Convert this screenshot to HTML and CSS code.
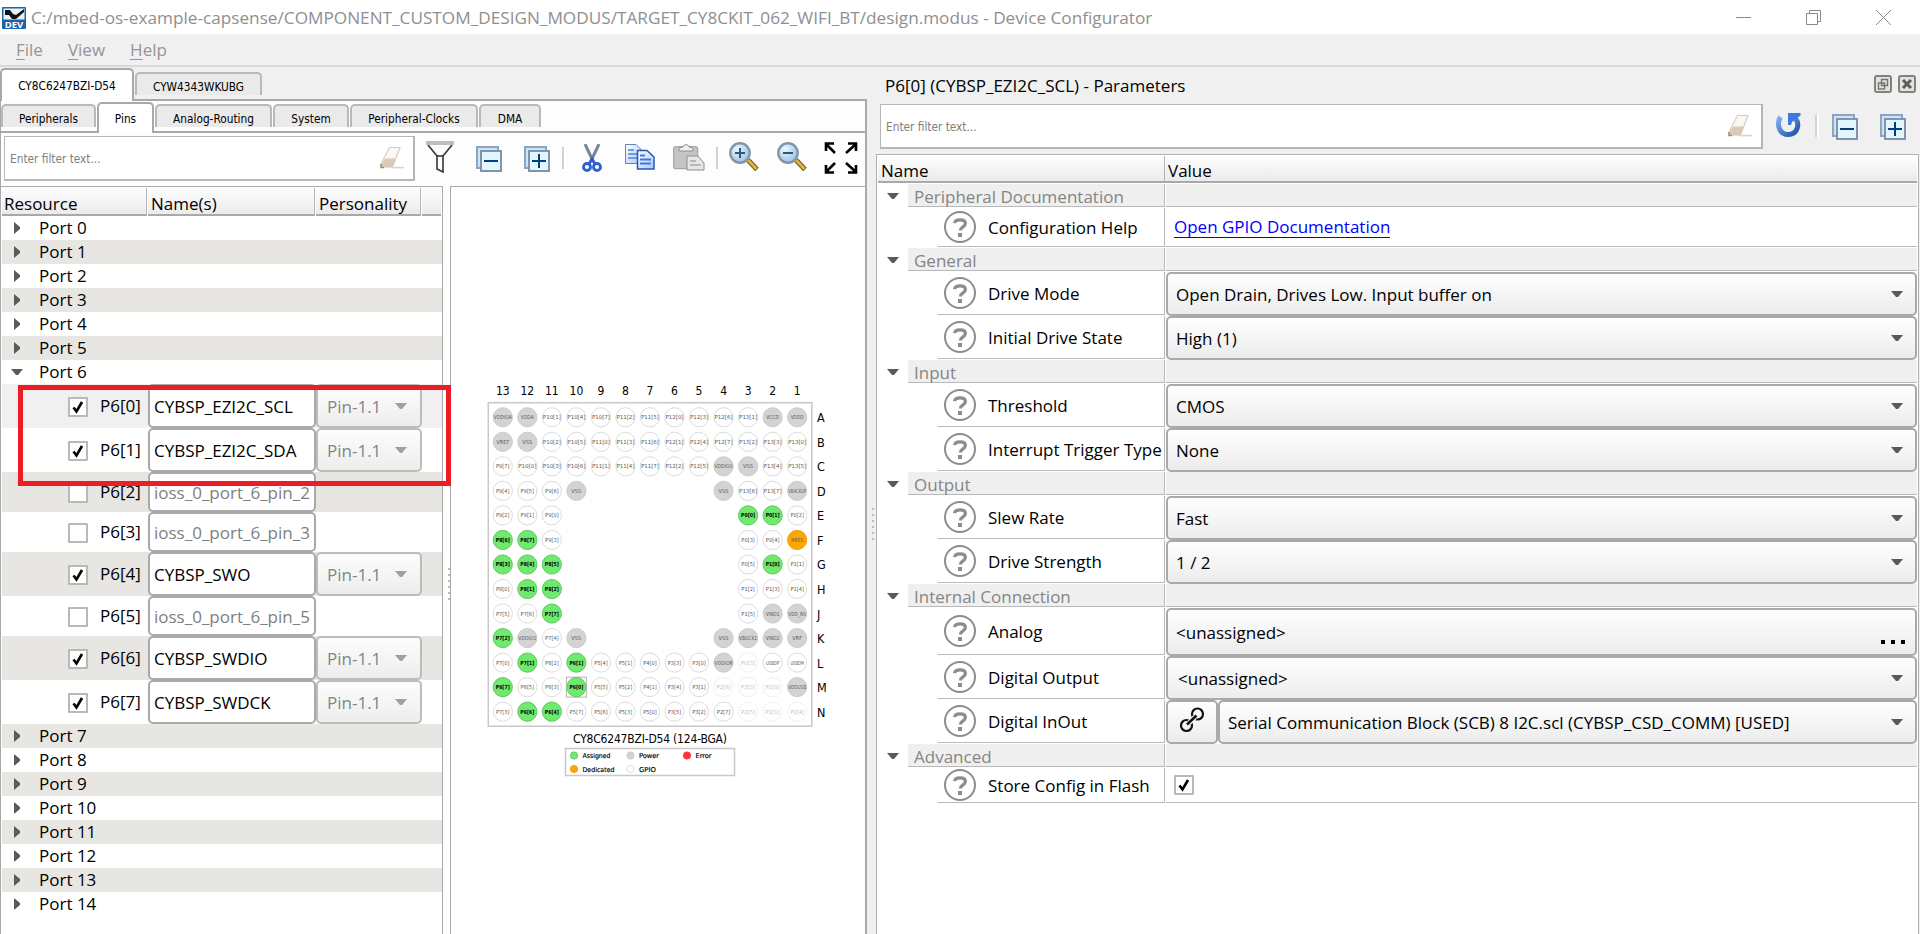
FILE: index.html
```
<!DOCTYPE html>
<html lang="en">
<head>
<meta charset="utf-8">
<title>Device Configurator</title>
<link rel="stylesheet" href="styles.css">
</head>
<body>
<svg class="defs" width="0" height="0">
  <defs>
    <linearGradient id="g-blue" x1="0" y1="0" x2="1" y2="1"><stop offset="0" stop-color="#7fb0f5"/><stop offset="1" stop-color="#1d4fa8"/></linearGradient>
    <linearGradient id="g-page" x1="0" y1="0" x2="1" y2="1"><stop offset="0" stop-color="#ffffff"/><stop offset="1" stop-color="#a9c8f7"/></linearGradient>
    <radialGradient id="g-lens" cx=".35" cy=".3" r=".8"><stop offset="0" stop-color="#eaf6ff"/><stop offset="1" stop-color="#8fc0e6"/></radialGradient>
  </defs>
  <symbol id="help" viewBox="0 0 32 32"><circle cx="16" cy="16" r="15" fill="#fff" stroke="#8c8c8c" stroke-width="2"/><path d="M10.6 12.2C10.8 9.8 13 8.8 16 8.8c3.400 0 5.400 1.300 5.400 3.800 0 3.400-5 3.200-5 7" fill="none" stroke="#8c8c8c" stroke-width="3.200"/><rect x="14" y="22" width="4" height="4" fill="#8c8c8c"/></symbol>
  <symbol id="down" viewBox="0 0 12 6"><path d="M0 0h12L7 6H5z" fill="currentColor"/></symbol>
  <symbol id="right" viewBox="0 0 6 12"><path d="M0 0L6 5v2L0 12z" fill="#5a5a5a"/></symbol>
  <symbol id="check" viewBox="0 0 16 16"><path d="M3.500 8.500L6.500 12.500L12 3" fill="none" stroke="#000" stroke-width="2.600"/></symbol>
  <symbol id="eraser" viewBox="0 0 24 24"><path d="M9.500 1.500L20 1.500L12.500 21L1.500 21L1 18z" fill="#fbf8f3" stroke="#d8cdbd" stroke-width="1.200"/><path d="M5 12.500L15.500 12.500L12.500 21.300L1 21.300L1 19z" fill="#d9cbb8"/><path d="M1 18v3.500h3" fill="none" stroke="#a08f78" stroke-width="1.500"/><path d="M11 21.600H24" stroke="#ddd3c5" stroke-width="1.600"/></symbol>
  <symbol id="collapse" viewBox="0 0 26 26"><rect x="1" y="1" width="21" height="21" fill="#c5e8ff" stroke="#93a3bd" stroke-width="2"/><rect x="5" y="5" width="20" height="20" fill="#e2f6ff" stroke="#8392ad" stroke-width="2"/><path d="M8 15H22" stroke="#003f79" stroke-width="2"/></symbol>
  <symbol id="expand" viewBox="0 0 26 26"><rect x="1" y="1" width="21" height="21" fill="#c5e8ff" stroke="#93a3bd" stroke-width="2"/><rect x="5" y="5" width="20" height="20" fill="#e2f6ff" stroke="#8392ad" stroke-width="2"/><path d="M8 15H22M15 8V22" stroke="#003f79" stroke-width="2"/></symbol>
  <symbol id="funnel" viewBox="0 0 28 32"><path d="M2 4L11 15V28L17 31V15L26 4" fill="#fdfdfd" stroke="#333" stroke-width="1.600"/><path d="M11 15H17" stroke="#333" stroke-width="1.600"/><path d="M0 2H28" stroke="#bdbdbd" stroke-width="4"/></symbol>
  <symbol id="lens" viewBox="0 0 30 30"><path d="M19 18L28 27.500" stroke="#6f5a28" stroke-width="5"/><path d="M19 18L27.500 27" stroke="#e9b23a" stroke-width="2.800"/><circle cx="11" cy="11" r="9.700" fill="url(#g-lens)" stroke="#8395a8" stroke-width="2.400"/></symbol>
</svg>

<header class="titlebar">
  <svg class="app-icon" viewBox="0 0 24 22"><rect width="24" height="22" rx="1" fill="#1b64a6"/><rect x="1.500" y="1.500" width="21" height="11" fill="#e9f1f7"/><path d="M3 3h5l3 4 3 1 8-6v3l-8 7h-4L7 8 3 8z" fill="#111"/><text x="12" y="20.500" text-anchor="middle" class="app-icon-text">DEV</text></svg>
  <span class="title">C:/mbed-os-example-capsense/COMPONENT_CUSTOM_DESIGN_MODUS/TARGET_CY8CKIT_062_WIFI_BT/design.modus - Device Configurator</span>
  <div class="window-buttons">
    <svg width="15" height="15"><path d="M0 7.500H15" stroke="#888"/></svg>
    <svg width="15" height="15"><path d="M.5 3.500H11.500V14.500H.5zM3.500 3.500V.5H14.500V11.500H11.500" fill="none" stroke="#888"/></svg>
    <svg width="15" height="15"><path d="M0 0L15 15M15 0L0 15" stroke="#888"/></svg>
  </div>
</header>
<nav class="menubar"><span><u>F</u>ile</span><span><u>V</u>iew</span><span><u>H</u>elp</span></nav>

<main class="workspace">
  <section class="left">
    <div class="tabs device-tabs"><span class="tab on">CY8C6247BZI-D54</span><span class="tab">CYW4343WKUBG</span></div>
    <div class="pane">
      <div class="tabs view-tabs"><span class="tab w95">Peripherals</span><span class="tab on w57">Pins</span><span class="tab w117">Analog-Routing</span><span class="tab w76">System</span><span class="tab w128">Peripheral-Clocks</span><span class="tab w62">DMA</span></div>
      <div class="toolbar">
        <div class="filter"><span>Enter filter text...</span><svg width="24" height="24"><use href="#eraser"/></svg></div>
        <svg class="t-funnel" width="28" height="32"><use href="#funnel"/></svg>
        <svg class="t-collapse" width="26" height="26"><use href="#collapse"/></svg>
        <svg class="t-expand" width="26" height="26"><use href="#expand"/></svg>
        <i class="sep"></i>
        <svg class="t-cut" width="20" height="28" viewBox="0 0 20 28"><path d="M3 0L11 17M17 0L9 17" stroke="#76879a" stroke-width="3"/><circle cx="5" cy="23" r="3.500" fill="none" stroke="#2f5fd0" stroke-width="2.800"/><circle cx="15" cy="23" r="3.500" fill="none" stroke="#2f5fd0" stroke-width="2.800"/><path d="M7 20L10 15L13 20" fill="none" stroke="#2f5fd0" stroke-width="3"/></svg>
        <svg class="t-copy" width="30" height="26" viewBox="0 0 30 26"><path d="M.5 .5H11L17 6.500V19.500H.5z" fill="url(#g-page)" stroke="#5d84c4"/><path d="M3 6H9M3 10H12M3 14H12" stroke="#6d9be8" stroke-width="1.800"/><path d="M12.500 6.500H22L29 13V25H12.500z" fill="url(#g-page)" stroke="#2b57b5" stroke-width="1.500"/><path d="M15 11.500H20M15 15.500H26M15 19.500H26" stroke="#3f78e0" stroke-width="2"/></svg>
        <svg class="t-paste" width="32" height="27" viewBox="0 0 32 27"><rect x=".7" y="2.700" width="24" height="22" rx="1.500" fill="#c4c4c4" stroke="#9a9a9a"/><path d="M6 7V4L10 3C10 0 16 0 16 3L20 4V7z" fill="#eee" stroke="#909090"/><path d="M14 12H25L31 19V26H14z" fill="#e6e6e6" stroke="#8e8e8e"/><path d="M17 17H23M17 21H28" stroke="#a8a8a8" stroke-width="1.600"/></svg>
        <i class="sep"></i>
        <svg class="t-in" width="30" height="30" viewBox="0 0 30 30"><use href="#lens"/><path d="M6 11H16M11 6V16" stroke="#2f5878" stroke-width="2"/></svg>
        <svg class="t-out" width="30" height="30" viewBox="0 0 30 30"><use href="#lens"/><path d="M6 11H16" stroke="#2f5878" stroke-width="2"/></svg>
        <svg class="t-fit" width="34" height="32" viewBox="0 0 34 32"><path d="M2 9V1.500H10M2 2L11 11M24 1.500H32V9M32 2L22 11M2 23V30.500H10M2 30L11 21M24 30.500H32V23M32 30L22 21" fill="none" stroke="#000" stroke-width="2.600"/></svg>
      </div>
      <div class="split">
        <div class="tree">
          <div class="tree-head"><span>Resource</span><span>Name(s)</span><span>Personality</span><span></span></div>
          <div class="port"><svg width="6" height="12"><use href="#right"/></svg>Port 0</div>
          <div class="port alt"><svg width="6" height="12"><use href="#right"/></svg>Port 1</div>
          <div class="port"><svg width="6" height="12"><use href="#right"/></svg>Port 2</div>
          <div class="port alt"><svg width="6" height="12"><use href="#right"/></svg>Port 3</div>
          <div class="port"><svg width="6" height="12"><use href="#right"/></svg>Port 4</div>
          <div class="port alt"><svg width="6" height="12"><use href="#right"/></svg>Port 5</div>
          <div class="port open"><svg width="12" height="6"><use href="#down"/></svg>Port 6</div>
          <div class="marked">
            <div class="pin current"><i class="box"><svg><use href="#check"/></svg></i><b>P6[0]</b><span class="name">CYBSP_EZI2C_SCL</span><span class="pers">Pin-1.1<svg><use href="#down"/></svg></span></div>
            <div class="pin"><i class="box"><svg><use href="#check"/></svg></i><b>P6[1]</b><span class="name">CYBSP_EZI2C_SDA</span><span class="pers">Pin-1.1<svg><use href="#down"/></svg></span></div>
          </div>
          <div class="pin small alt"><i class="box"></i><b>P6[2]</b><span class="name">ioss_0_port_6_pin_2</span></div>
          <div class="pin small"><i class="box"></i><b>P6[3]</b><span class="name">ioss_0_port_6_pin_3</span></div>
          <div class="pin alt"><i class="box"><svg><use href="#check"/></svg></i><b>P6[4]</b><span class="name">CYBSP_SWO</span><span class="pers">Pin-1.1<svg><use href="#down"/></svg></span></div>
          <div class="pin small"><i class="box"></i><b>P6[5]</b><span class="name">ioss_0_port_6_pin_5</span></div>
          <div class="pin alt"><i class="box"><svg><use href="#check"/></svg></i><b>P6[6]</b><span class="name">CYBSP_SWDIO</span><span class="pers">Pin-1.1<svg><use href="#down"/></svg></span></div>
          <div class="pin"><i class="box"><svg><use href="#check"/></svg></i><b>P6[7]</b><span class="name">CYBSP_SWDCK</span><span class="pers">Pin-1.1<svg><use href="#down"/></svg></span></div>
          <div class="port alt"><svg width="6" height="12"><use href="#right"/></svg>Port 7</div>
          <div class="port"><svg width="6" height="12"><use href="#right"/></svg>Port 8</div>
          <div class="port alt"><svg width="6" height="12"><use href="#right"/></svg>Port 9</div>
          <div class="port"><svg width="6" height="12"><use href="#right"/></svg>Port 10</div>
          <div class="port alt"><svg width="6" height="12"><use href="#right"/></svg>Port 11</div>
          <div class="port"><svg width="6" height="12"><use href="#right"/></svg>Port 12</div>
          <div class="port alt"><svg width="6" height="12"><use href="#right"/></svg>Port 13</div>
          <div class="port"><svg width="6" height="12"><use href="#right"/></svg>Port 14</div>
        </div>
        <div class="grip"></div>
        <div class="package"><svg id="package" width="415" height="747" viewBox="451 187 415 747"></svg></div>
      </div>
    </div>
  </section>
  <div class="grip wide"></div>
  <section class="right">
    <div class="dock-title"><span>P6[0] (CYBSP_EZI2C_SCL) - Parameters</span>
      <svg width="18" height="20" viewBox="0 0 18 20"><rect x="1" y="2" width="16" height="16" rx="2" fill="#e3e2df" stroke="#83817c" stroke-width="2"/><path d="M7.500 5.500H13.500V11.500H7.500zM4.500 9H10.500V15H4.500z" fill="#e3e2df" stroke="#77756f" stroke-width="1.400"/></svg>
      <svg width="18" height="20" viewBox="0 0 18 20"><rect x="1" y="2" width="16" height="16" rx="2" fill="#e3e2df" stroke="#83817c" stroke-width="2"/><path d="M5 6L13 14M13 6L5 14" stroke="#5f5d59" stroke-width="3"/></svg>
    </div>
    <div class="param-bar">
      <div class="filter"><span>Enter filter text...</span><svg width="24" height="24"><use href="#eraser"/></svg></div>
      <svg class="p-reset" width="25" height="25" viewBox="0 0 25 25"><path d="M4.500 4C.5 10 2.500 21.500 12 21.500S24 11 19.500 5.500" fill="none" stroke="url(#g-blue)" stroke-width="5"/><path d="M12 0H24.500V2.500L16 9L15 12H12z" fill="#3f78e0"/></svg>
      <i class="sep"></i>
      <svg class="p-collapse" width="26" height="26"><use href="#collapse"/></svg>
      <svg class="p-expand" width="26" height="26"><use href="#expand"/></svg>
    </div>
    <div class="params">
      <div class="param-head"><span>Name</span><span>Value</span></div>
      <div class="group"><svg><use href="#down"/></svg><span>Peripheral Documentation</span><i></i></div>
      <div class="row h40"><span class="label"><svg><use href="#help"/></svg>Configuration Help</span><span class="value"><a class="link">Open GPIO Documentation</a></span></div>
      <div class="group"><svg><use href="#down"/></svg><span>General</span><i></i></div>
      <div class="row"><span class="label"><svg><use href="#help"/></svg>Drive Mode</span><span class="value"><span class="combo">Open Drain, Drives Low. Input buffer on<svg><use href="#down"/></svg></span></span></div>
      <div class="row"><span class="label"><svg><use href="#help"/></svg>Initial Drive State</span><span class="value"><span class="combo">High (1)<svg><use href="#down"/></svg></span></span></div>
      <div class="group"><svg><use href="#down"/></svg><span>Input</span><i></i></div>
      <div class="row"><span class="label"><svg><use href="#help"/></svg>Threshold</span><span class="value"><span class="combo">CMOS<svg><use href="#down"/></svg></span></span></div>
      <div class="row"><span class="label"><svg><use href="#help"/></svg>Interrupt Trigger Type</span><span class="value"><span class="combo">None<svg><use href="#down"/></svg></span></span></div>
      <div class="group"><svg><use href="#down"/></svg><span>Output</span><i></i></div>
      <div class="row"><span class="label"><svg><use href="#help"/></svg>Slew Rate</span><span class="value"><span class="combo">Fast<svg><use href="#down"/></svg></span></span></div>
      <div class="row"><span class="label"><svg><use href="#help"/></svg>Drive Strength</span><span class="value"><span class="combo">1 / 2<svg><use href="#down"/></svg></span></span></div>
      <div class="group"><svg><use href="#down"/></svg><span>Internal Connection</span><i></i></div>
      <div class="row h48"><span class="label"><svg><use href="#help"/></svg>Analog</span><span class="value"><span class="combo">&lt;unassigned&gt;<em class="dots"><i></i><i></i><i></i></em></span></span></div>
      <div class="row"><span class="label"><svg><use href="#help"/></svg>Digital Output</span><span class="value"><span class="combo inset">&lt;unassigned&gt;<svg><use href="#down"/></svg></span></span></div>
      <div class="row"><span class="label"><svg><use href="#help"/></svg>Digital InOut</span><span class="value"><span class="link-btn"><svg width="26" height="26" viewBox="0 0 26 26"><g fill="none" stroke="#111" stroke-width="2.200"><circle cx="18.500" cy="7" r="5.500"/><circle cx="7.500" cy="18.500" r="5.500"/></g><path d="M10 16L16 10" stroke="#fff" stroke-width="5"/><path d="M8 17.500L17.500 8.500" stroke="#111" stroke-width="2.600"/></svg></span><span class="combo scb">Serial Communication Block (SCB) 8 I2C.scl (CYBSP_CSD_COMM) [USED]<svg><use href="#down"/></svg></span></span></div>
      <div class="group"><svg><use href="#down"/></svg><span>Advanced</span><i></i></div>
      <div class="row h36"><span class="label"><svg><use href="#help"/></svg>Store Config in Flash</span><span class="value"><i class="box"><svg><use href="#check"/></svg></i></span></div>
    </div>
  </section>
</main>
<script src="package.js"></script>
</body>
</html>
```
FILE: styles.css
```
* { box-sizing: border-box; }
body { margin: 0; width: 1920px; height: 934px; overflow: hidden; background: #f0f0f0; color: #000; font: 17px "Open Sans", "Noto Sans", sans-serif; display: flex; flex-direction: column; white-space: nowrap; }
svg { display: block; flex: none; }
i, em, b { font-style: normal; font-weight: 400; }
.defs { position: absolute; }

.titlebar { height: 34px; flex: none; background: #fff; display: flex; align-items: center; padding: 1px 29px 0 2px; color: #8f8f8f; }
.app-icon { width: 24px; height: 22px; margin-top: 1px; }
.app-icon-text { font: 700 9.500px "Open Sans", sans-serif; fill: #fff; }
.title { margin-left: 5px; font-size: 17.200px; }
.window-buttons { margin-left: auto; display: flex; gap: 55px; }
.menubar { height: 33px; flex: none; display: flex; gap: 25px; padding: 3px 0 0 16px; color: #959595; border-bottom: 2px solid #d9d9d9; font-size: 17px; line-height: 26px; }
.menubar u { text-underline-offset: 3px; text-decoration-thickness: 1px; }

.workspace { flex: 1; display: flex; min-height: 0; }
.left { width: 867px; display: flex; flex-direction: column; }
.tabs { display: flex; align-items: flex-end; font: 11.750px "DejaVu Sans Condensed", "DejaVu Sans", sans-serif; }
.tab { display: flex; align-items: center; justify-content: center; background: #eaeaea; border: 2px solid #b9b9b9; border-bottom: 0; border-radius: 5px 5px 0 0; height: 23px; margin-bottom: 4px; padding-top: 5px; flex: none; }
.tab.on { background: #fff; border-color: #a9a9a9; position: relative; margin-bottom: -2px; padding: 0; }
.device-tabs { height: 32px; }
.device-tabs .tab { width: 127px; margin-left: 1px; }
.device-tabs .tab.on { width: 134px; height: 33px; margin-left: 0; z-index: 1; }
.pane { flex: 1; display: flex; flex-direction: column; background: #fdfdfd; border: solid #a9a9a9; border-width: 2px 2px 0 1px; min-height: 0; }
.view-tabs { height: 32px; border-bottom: 2px solid #a9a9a9; gap: 1px; flex: none; }
.view-tabs .tab.on { height: 31px; }
.w95 { width: 95px; } .w57 { width: 57px; } .w117 { width: 117px; } .w76 { width: 76px; } .w128 { width: 128px; } .w62 { width: 62px; }

.toolbar { height: 53px; flex: none; display: flex; padding-left: 3px; align-items: flex-start; }
.filter { display: flex; align-items: center; justify-content: space-between; background: #fff; border: solid #b6b6b6; border-width: 1px 2px 2px 1px; height: 45px; padding: 2px 9px 0 5px; color: #808080; font: 11.750px "DejaVu Sans Condensed", "DejaVu Sans", sans-serif; }
.toolbar .filter { width: 411px; margin-top: 3px; }
.filter svg { margin-bottom: 3px; }
.sep { width: 4px; height: 22px; border-left: 2px solid #d2d2d2; border-right: 2px solid #fff; margin-top: 14px; }
.t-funnel { margin: 8px 0 0 11px; }
.t-collapse { margin: 13px 0 0 22px; }
.t-expand { margin: 13px 12px 0 22px; }
.t-cut { margin: 11px 0 0 16px; }
.t-copy { margin: 11px 0 0 23px; }
.t-paste { margin: 11px 11px 0 18px; }
.t-in { margin: 9px 0 0 9px; }
.t-out { margin: 9px 0 0 18px; }
.t-fit { margin: 9px 0 0 17px; }

.split { flex: 1; display: flex; min-height: 0; }
.tree { width: 442px; background: #fff; border: solid #a9a9a9; border-width: 1px 1px 0 0; padding: 1px 0 0 1px; }
.tree-head { display: flex; height: 28px; margin-right: 1px; }
.tree-head span, .param-head span { background: linear-gradient(#fdfdfd, #ebebeb); border-bottom: 2px solid #a9a9a9; border-right: 1px solid #b5b5b5; padding: 2px 0 0 3px; line-height: 27px; margin-right: 1px; }
.tree-head span:nth-child(1) { width: 145px; padding-left: 2px; }
.tree-head span:nth-child(2) { width: 167px; }
.tree-head span:nth-child(3) { width: 105px; }
.tree-head span:nth-child(4) { flex: 1; border-right: 0; margin: 0; }
.port { height: 24px; padding-left: 12px; display: flex; align-items: center; line-height: 24px; }
.port svg { margin-right: 19px; }
.port.open svg { margin: 0 16px 0 -3px; }
.port svg, .group svg { color: #5a5a5a; }
.alt { background: #e7e6e2; }
.pin { height: 44px; display: flex; align-items: center; padding-left: 66px; }
.pin.small { height: 40px; }
.pin b { width: 48px; padding-left: 12px; font-size: 17px; line-height: 24px; }
.box { display: block; width: 20px; height: 20px; border: 2px solid #b9b9b9; border-radius: 1px; background: #fff; flex: none; }
.pin .box { margin-top: 1px; }
.box svg { width: 16px; height: 16px; }
.name { align-self: stretch; width: 168px; margin-left: 12px; background: #fff; border: 2px solid #a9a9a9; border-radius: 5px; display: flex; align-items: center; padding-left: 4px; }
.small .name { color: #808080; }
.pers { align-self: stretch; width: 106px; background: linear-gradient(#fdfdfd, #ededed); border: 2px solid #bcbcbc; border-radius: 5px; color: #858585; display: flex; align-items: center; padding: 0 13px 0 9px; justify-content: space-between; }
.pers svg, .combo svg { width: 12px; height: 6px; }
.pers svg { color: #a0a0a0; }
.current { background: #f0f0f0; }
.marked { position: relative; }
.marked::after { content: ""; position: absolute; left: 16px; top: 1px; width: 423px; height: 91px; border: 5px solid #ee1c25; }

.grip { width: 7px; display: flex; align-items: center; position: relative; }
.grip::after { content: ""; position: absolute; left: 5px; top: 382px; width: 2px; height: 34px; background: repeating-linear-gradient(#bdbdbd 0 2px, transparent 2px 6px); }
.grip.wide { width: 9px; }
.grip.wide::after { left: 5px; top: 441px; }
.package { flex: 1; background: #fff; border: solid #a9a9a9; border-width: 1px 0 0 1px; overflow: hidden; }
.package text { font-family: "DejaVu Sans Condensed", "DejaVu Sans", sans-serif; }
.ball { stroke: #dcdcdc; stroke-width: 1; fill: #fff; }
.ball-power { fill: #d3d3d3; stroke: #cccccc; }
.ball-on { fill: #6fea6f; stroke: #62c862; }
.ball-ded { fill: #ffa500; stroke: #f0a020; }
.ball-err { fill: #ff3333; stroke: #ff3333; }
.pad { font-size: 5.500px; fill: #5c5c5c; text-anchor: middle; }
.pad-on { fill: #000; font-weight: 700; }
.faint { opacity: .4; }
.axis { font-size: 12px; text-anchor: middle; }
.axis-row { font-size: 12.500px; }
.caption { font-size: 12px; text-anchor: middle; }
.key { font-size: 6.600px; stroke: #000; stroke-width: .15; }
.frame { fill: none; stroke: #c8c8c8; stroke-width: 1.500; }

.right { width: 1044px; display: flex; flex-direction: column; padding: 0 1px 0 0; }
.dock-title { display: flex; align-items: center; height: 37px; padding: 0 3px 0 9px; margin-right: 0; }
.dock-title span { flex: 1; }
.dock-title svg { margin: -3px 0 0 6px; }
.param-bar { height: 50px; display: flex; align-items: flex-start; }
.param-bar .filter { width: 883px; margin-left: 4px; }
.p-reset { margin: 9px 0 0 13px; }
.param-bar .sep { margin: 11px 0 0 14px; }
.p-collapse { margin: 10px 0 0 13px; }
.p-expand { margin: 10px 0 0 22px; }
.params { flex: 1; background: #fff; border: solid #b0b0b0; border-width: 1px 1px 0 1px; padding: 1px 1px 0; }
.param-head { display: flex; height: 28px; padding-bottom: 1px; }
.param-head span { line-height: 25px; margin: 0; }
.param-head span:nth-child(1) { width: 287px; }
.param-head span:nth-child(2) { flex: 1; border-right: 0; }
.group { height: 24px; display: grid; grid-template-columns: 30px 257px 1fr; align-items: center; color: #858585; }
.group svg { width: 12px; height: 6px; margin-left: 9px; }
.group span, .group i { height: 23px; background: #efefef; border-bottom: 1px solid #b9b9b9; align-self: start; line-height: 25px; padding-left: 6px; }
.group span { border-right: 1px solid #b9b9b9; }
.group i { margin-left: 1px; }
.row { height: 44px; display: flex; padding-left: 60px; }
.row.h40 { height: 40px; } .row.h48 { height: 48px; } .row.h36 { height: 36px; }
.label { width: 227px; display: flex; align-items: center; height: calc(100% - 1px); border: solid #b9b9b9; border-width: 0 1px 1px 0; padding-left: 6px; }
.label svg { width: 32px; height: 32px; margin-right: 12px; }
.value { flex: 1; display: flex; align-items: center; margin-left: 1px; height: 100%; }
.h40 .value, .h36 .value { height: calc(100% - 1px); border-bottom: 1px solid #b9b9b9; padding-left: 8px; }
.link { color: #00f; line-height: 21px; border-bottom: 1px solid #00f; }
.combo, .link-btn { height: 100%; border: 2px solid #a9a9a9; border-radius: 5px; background: linear-gradient(#fefefe, #ececec); display: flex; align-items: center; }
.combo { flex: 1; justify-content: space-between; padding: 0 12px 0 8px; }
.combo svg { color: #5a5a5a; }
.combo.inset { padding-left: 10px; }
.link-btn { width: 52px; justify-content: center; padding-bottom: 5px; }
.dots { display: flex; gap: 6px; align-self: flex-end; margin: 0 -2px 10px 0; }
.dots i { width: 4px; height: 4px; background: #000; }
```
FILE: package.js
```
// Ball map of the 124-BGA package: "*" assigned, "#" power, "!" dedicated, "~" disabled, "-" no ball.
const rows = {
  A: '#VDDIOA #VDDA P10[1] P10[4] P10[7] P11[2] P11[5] P12[0] P12[3] P12[6] P13[1] #VCCD #VDDD',
  B: '#VREF #VSS P10[2] P10[5] P11[0] P11[3] P11[6] P12[1] P12[4] P12[7] P13[2] P13[3] P13[0]',
  C: 'P9[7] P10[0] P10[3] P10[6] P11[1] P11[4] P11[7] P12[2] P12[5] #VDDIO0 #VSS P13[4] P13[5]',
  D: 'P9[4] P9[5] P9[6] #VSS - - - - - #VSS P13[6] P13[7] #VBACKUP',
  E: 'P9[2] P9[1] P9[0] - - - - - - - *P0[0] *P0[1] P0[2]',
  F: '*P8[6] *P8[7] P9[3] - - - - - - - P0[3] P0[4] !XRES',
  G: '*P8[3] *P8[4] *P8[5] - - - - - - - P0[5] *P1[0] P1[1]',
  H: 'P8[0] *P8[1] *P8[2] - - - - - - - P1[2] P1[3] P1[4]',
  J: 'P7[5] P7[6] *P7[7] - - - - - - - P1[5] #VIND1 #VDD_NS',
  K: '*P7[2] #VDDIO1 P7[4] #VSS - - - - - #VSS #VBUCK1 #VIND2 #VRF',
  L: 'P7[0] *P7[1] P6[2] *P6[1] P5[4] P5[1] P4[0] P3[3] P3[0] #VDDIOR ~P0[3] USBDP USBDM',
  M: '*P6[7] P6[5] P6[3] *P6[0] P5[5] P5[2] P4[1] P3[4] P3[1] ~P2[6] ~P2[3] ~P2[0] #VDDUSB',
  N: 'P7[3] *P6[6] *P6[4] P5[7] P5[6] P5[3] P5[0] P3[5] P3[2] P2[7] ~P2[5] ~P2[1] ~P2[4]'
};
const x0 = 502.8, y0 = 417.3, pitch = 24.53;
const kinds = { '*': 'on', '#': 'power', '!': 'ded', '~': 'off' };
let out = '<rect class="frame" x="488.3" y="402.7" width="323.5" height="323.500"/>';

for (let c = 0; c < 13; c++) {
  out += `<text class="axis" x="${x0 + c * pitch}" y="395">${13 - c}</text>`;
}
Object.entries(rows).forEach(([letter, line], r) => {
  const y = y0 + r * pitch;
  out += `<text class="axis-row" x="817" y="${y + 5}">${letter}</text>`;
  line.split(' ').forEach((cell, c) => {
    if (cell === '-') return;
    const kind = kinds[cell[0]] || '';
    const label = kind ? cell.slice(1) : cell;
    const x = x0 + c * pitch;
    if (label === 'P6[0]') out += `<rect x="${x - 10}" y="${y - 10}" width="20" height="20" fill="#fff" stroke="#b4b4b4"/>`;
    out += `<g class="${kind === 'off' ? 'faint' : ''}"><circle class="ball ball-${kind}" cx="${x}" cy="${y}" r="9.6"/>`;
    const len = label.length > 5 ? 18 : label.length > 4 ? (kind ? 14 : 13.5) : label.length > 3 ? 13 : 10;
    out += `<text class="pad pad-${kind}" x="${x}" y="${y + 2}" textLength="${len}" lengthAdjust="spacingAndGlyphs">${label}</text></g>`;
  });
});

out += '<text class="caption" x="650" y="742.500" textLength="154">CY8C6247BZI-D54 (124-BGA)</text>';
out += '<rect class="frame" x="565.5" y="748.5" width="169" height="27"/>';
[['on', 'Assigned', 574, 755.5, 28], ['power', 'Power', 630.5, 755.5, 20], ['err', 'Error', 687, 755.5, 16],
 ['ded', 'Dedicated', 574, 769, 32], ['', 'GPIO', 630.5, 769, 17]].forEach(([kind, label, x, y, w]) => {
  out += `<circle class="ball ball-${kind}" cx="${x}" cy="${y}" r="3.6"/><text class="key" x="${x + 8.5}" y="${y + 2.6}" textLength="${w}" lengthAdjust="spacingAndGlyphs">${label}</text>`;
});
document.getElementById('package').innerHTML = out;
```
